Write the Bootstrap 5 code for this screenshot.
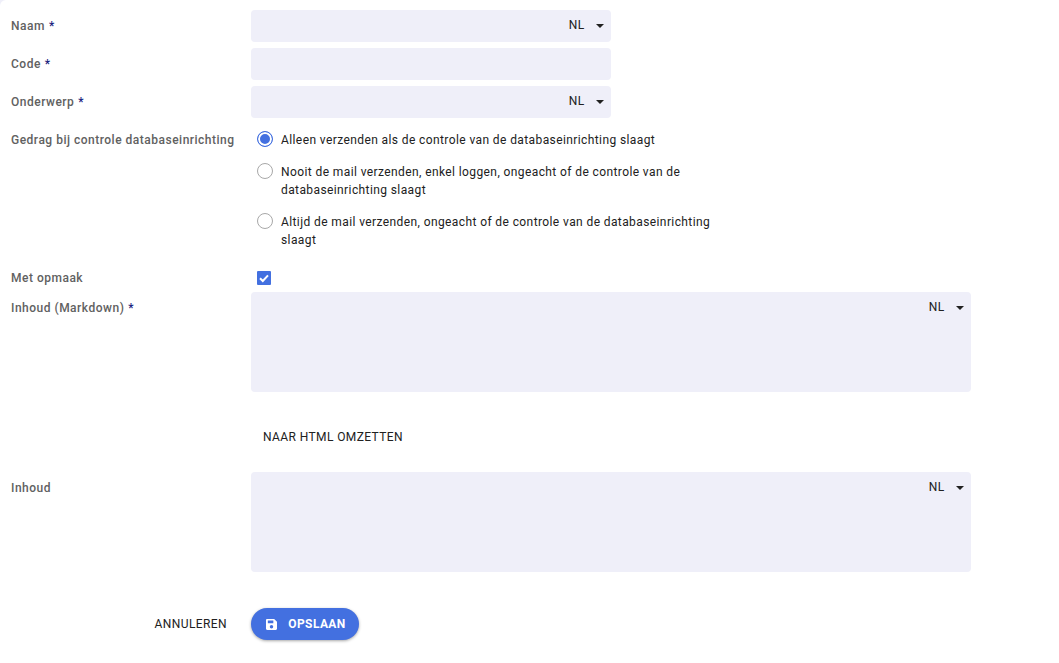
<!DOCTYPE html>
<html lang="nl">
<head>
  <meta charset="UTF-8">
  <title>Mailsjabloon</title>
  <meta name="viewport" content="width=device-width, initial-scale=1.0"/>
  <link href="https://cdn.jsdelivr.net/npm/bootstrap@5.3.0/dist/css/bootstrap.min.css" rel="stylesheet">
  <style>
    html, body { height: 100%; }
    html { background: #efeff9; }
    body {
      background: #fff;
      border-top-left-radius: 6px;
      font-family: Roboto, "Liberation Sans", sans-serif;
      font-size: 12px;
      letter-spacing: .4px;
      color: #212121;
      overflow: hidden;
    }
    .mail-form { padding: 10px 0 0 11px; }
    .form-line { display: flex; margin-bottom: 6px; }
    .form-line.short-line { height: 24px; }
    .line-label {
      width: 240px;
      flex: none;
      font-weight: 500;
      letter-spacing: .5px;
      color: #616161;
      line-height: 32px;
    }
    .line-label .req { color: #1a237e; margin-left: .5px; }
    .field-box {
      background: #efeff9;
      border-radius: 4px;
      height: 32px;
      width: 360px;
      display: flex;
      justify-content: flex-end;
      align-items: flex-start;
    }
    .field-box.wide { width: 720px; height: 100px; }
    .lang-pick { display: flex; align-items: center; height: 30px; padding-right: 7px; line-height: 30px; }
    .lang-pick .caret-down {
      width: 0; height: 0; margin-left: 11.5px; margin-top: 1px;
      border-left: 4px solid transparent; border-right: 4px solid transparent; border-top: 4px solid #212121;
    }
    .radio-set { width: 460px; padding-left: 6px; padding-top: 6px; }
    .radio-line { display: flex; align-items: flex-start; margin-bottom: 13px; line-height: 18px; }
    .radio-line:last-child { margin-bottom: 7px; }
    .radio-text { padding-top: 1px; }
    .radio-dot {
      flex: none; width: 16px; height: 16px; margin-right: 8px; margin-top: 1px;
      border: 1.5px solid #a8a8a8; border-radius: 50%; background: #fff;
    }
    .radio-dot.on { border-color: #4370e0; box-shadow: inset 0 0 0 2px #fff; background: #4370e0; }
    .tick-box {
      width: 14px; height: 14px; margin: 9px 0 0 6px;
      background: #4370e0; border-radius: 1px; display: flex; align-items: center; justify-content: center;
    }
    .plain-btn {
      background: none; border: 0; padding: 0; color: #212121;
      font-size: 12px; letter-spacing: .4px; text-transform: uppercase;
    }
    .convert-line { padding-left: 252px; height: 32px; line-height: 32px; margin: 29px 0 19px; }
    .save-line { display: flex; align-items: center; margin-top: 36px; }
    .cancel-cell { width: 216px; flex: none; text-align: right; }
    .save-btn {
      margin-left: 24px; height: 32px; width: 108px; padding: 0 0 0 2px; border-radius: 16px; border: 0;
      background: #4370e0; color: #fff; font-weight: 700; font-size: 12px; letter-spacing: .4px;
      display: flex; align-items: center; justify-content: center; gap: 11px;
      box-shadow: 0 1px 3px rgba(0,0,0,.35);
    }
  </style>
</head>
<body>
  <form class="mail-form">
    <div class="form-line">
      <div class="line-label">Naam <span class="req">*</span></div>
      <div class="field-box"><div class="lang-pick">NL<span class="caret-down"></span></div></div>
    </div>
    <div class="form-line">
      <div class="line-label">Code <span class="req">*</span></div>
      <div class="field-box"></div>
    </div>
    <div class="form-line">
      <div class="line-label">Onderwerp <span class="req">*</span></div>
      <div class="field-box"><div class="lang-pick">NL<span class="caret-down"></span></div></div>
    </div>
    <div class="form-line">
      <div class="line-label">Gedrag bij controle databaseinrichting</div>
      <div class="radio-set">
        <div class="radio-line"><span class="radio-dot on"></span><span class="radio-text">Alleen verzenden als de controle van de databaseinrichting slaagt</span></div>
        <div class="radio-line"><span class="radio-dot"></span><span class="radio-text">Nooit de mail verzenden, enkel loggen, ongeacht of de controle van de databaseinrichting slaagt</span></div>
        <div class="radio-line"><span class="radio-dot"></span><span class="radio-text">Altijd de mail verzenden, ongeacht of de controle van de databaseinrichting slaagt</span></div>
      </div>
    </div>
    <div class="form-line short-line">
      <div class="line-label">Met opmaak</div>
      <div class="tick-box">
        <svg width="12" height="12" viewBox="0 0 12 12"><path d="M2 6.200 4.800 9 10 3.400" fill="none" stroke="#fff" stroke-width="2"/></svg>
      </div>
    </div>
    <div class="form-line">
      <div class="line-label">Inhoud (Markdown) <span class="req">*</span></div>
      <div class="field-box wide"><div class="lang-pick">NL<span class="caret-down"></span></div></div>
    </div>
    <div class="convert-line"><button type="button" class="plain-btn">Naar HTML omzetten</button></div>
    <div class="form-line">
      <div class="line-label">Inhoud</div>
      <div class="field-box wide"><div class="lang-pick">NL<span class="caret-down"></span></div></div>
    </div>
    <div class="save-line">
      <div class="cancel-cell"><button type="button" class="plain-btn">Annuleren</button></div>
      <button type="button" class="save-btn">
        <svg width="11" height="11" viewBox="0 0 12 12"><path fill="#fff" fill-rule="evenodd" d="M1.300 0h7.600L12 3.100v7.600c0 .7-.6 1.300-1.300 1.300H1.300C.6 12 0 11.400 0 10.700V1.300C0 .6.600 0 1.300 0zM2 1.700v2.800h6V1.700zM6 6.500a1.900 1.900 0 1 0 0 3.800 1.900 1.900 0 0 0 0-3.800z"/></svg>
        OPSLAAN
      </button>
    </div>
  </form>
  <script src="https://cdn.jsdelivr.net/npm/bootstrap@5.3.0/dist/js/bootstrap.bundle.min.js"></script>
</body>
</html>
